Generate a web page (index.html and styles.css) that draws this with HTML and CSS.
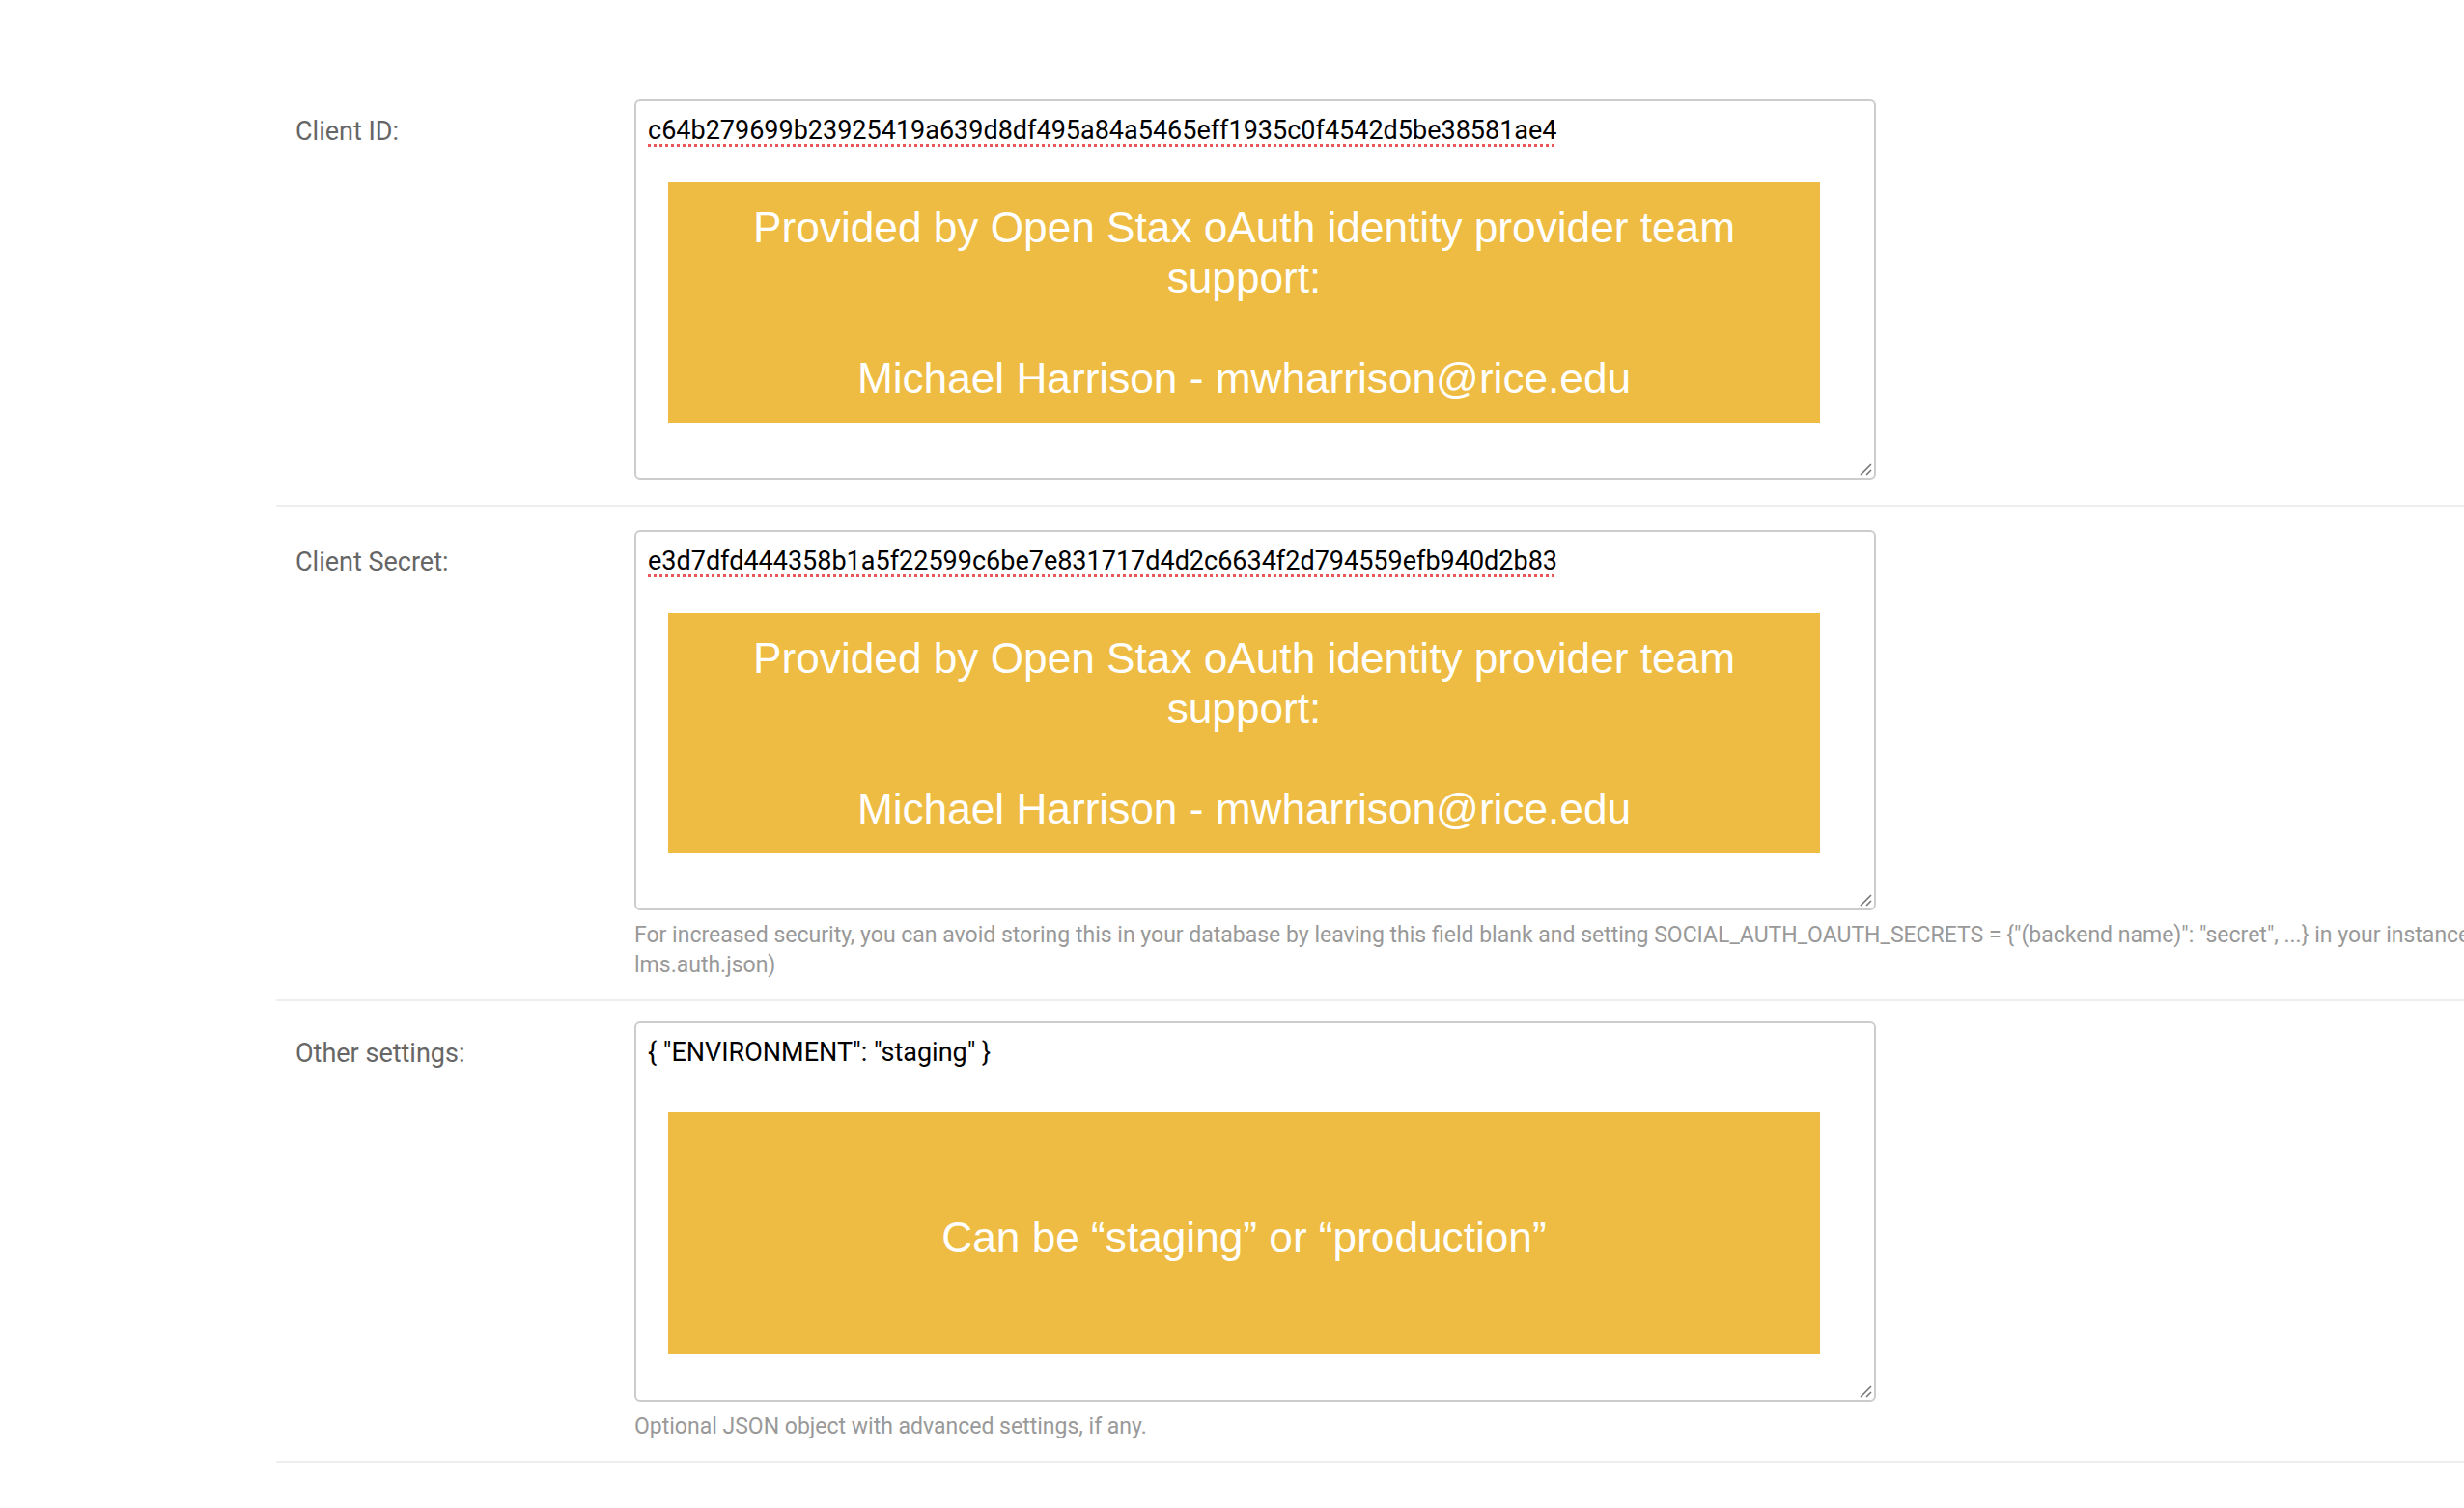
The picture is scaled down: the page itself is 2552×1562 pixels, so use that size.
FILE: index.html
```html
<!DOCTYPE html>
<html>
<head>
<meta charset="utf-8">
<link rel="stylesheet" href="styles.css">
</head>
<body>
<div class="form">
  <div class="row">
    <label class="label">Client ID:</label>
    <div class="field">
      <div class="textarea">
        <span class="spell">c64b279699b23925419a639d8df495a84a5465eff1935c0f4542d5be38581ae4</span>
        <div class="note">Provided by Open Stax oAuth identity provider team support:<br><br>Michael Harrison - mwharrison@rice.edu</div>
        <svg class="grip" width="14" height="14" viewBox="0 0 14 14"><path d="M13 2 L2 13 M13 8 L8 13" stroke="#777" stroke-width="1.6" fill="none"/></svg>
      </div>
    </div>
  </div>
  <div class="row">
    <label class="label">Client Secret:</label>
    <div class="field">
      <div class="textarea">
        <span class="spell">e3d7dfd444358b1a5f22599c6be7e831717d4d2c6634f2d794559efb940d2b83</span>
        <div class="note">Provided by Open Stax oAuth identity provider team support:<br><br>Michael Harrison - mwharrison@rice.edu</div>
        <svg class="grip" width="14" height="14" viewBox="0 0 14 14"><path d="M13 2 L2 13 M13 8 L8 13" stroke="#777" stroke-width="1.6" fill="none"/></svg>
      </div>
      <p class="help">For increased security, you can avoid storing this in your database by leaving this field blank and setting SOCIAL_AUTH_OAUTH_SECRETS = {"(backend name)": "secret", ...} in your instance's lms.auth.json)</p>
    </div>
  </div>
  <div class="row row-last">
    <label class="label">Other settings:</label>
    <div class="field">
      <div class="textarea">
        <span>{ "ENVIRONMENT": "staging" }</span>
        <div class="note note-single">Can be “staging” or “production”</div>
        <svg class="grip" width="14" height="14" viewBox="0 0 14 14"><path d="M13 2 L2 13 M13 8 L8 13" stroke="#777" stroke-width="1.6" fill="none"/></svg>
      </div>
      <p class="help">Optional JSON object with advanced settings, if any.</p>
    </div>
  </div>
</div>
</body>
</html>
```

FILE: styles.css
```css
html, body {
  margin: 0;
  padding: 0;
  background: #fff;
  overflow: hidden;
  width: 2552px;
  height: 1562px;
}

body {
  font-family: Roboto, "Liberation Sans", sans-serif;
}

.form {
  padding-top: 79px;
  margin-left: 286px;
}

.row {
  display: flex;
  align-items: flex-start;
  padding: 24px 0 26px 20px;
  border-bottom: 2px solid #eeeeee;
}

.row:nth-child(2) {
  padding-bottom: 20px;
}

.row-last {
  padding-top: 21px;
  padding-bottom: 20px;
}

.label {
  width: 351px;
  flex: none;
  font-size: 27px;
  color: #666;
  line-height: 32px;
  padding-top: 17px;
}

.field {
  flex: none;
}

.textarea {
  position: relative;
  width: 1286px;
  height: 394px;
  box-sizing: border-box;
  border: 2px solid #cccccc;
  border-radius: 6px;
  padding: 14px 12px;
  font-size: 27px;
  line-height: 32px;
  color: #000;
}

.spell {
  text-decoration: underline dotted #e8585a;
  text-decoration-thickness: 3px;
  text-underline-offset: 5px;
}

.note {
  position: absolute;
  left: 33px;
  top: 84px;
  width: 1193px;
  height: 249px;
  box-sizing: border-box;
  padding: 21px 60px 20px;
  background: #eebc42;
  color: #fff;
  font-family: "Liberation Sans", Arial, sans-serif;
  font-size: 44.2px;
  line-height: 52px;
  text-align: center;
}

.note-single {
  top: 92px;
  height: 251px;
  display: flex;
  align-items: center;
  justify-content: center;
  padding: 8px 0 0;
}

.grip {
  position: absolute;
  right: 2px;
  bottom: 2px;
}

.help {
  margin: 10px 0 0;
  width: 1960px;
  font-size: 23px;
  line-height: 31px;
  color: #999;
}
```
